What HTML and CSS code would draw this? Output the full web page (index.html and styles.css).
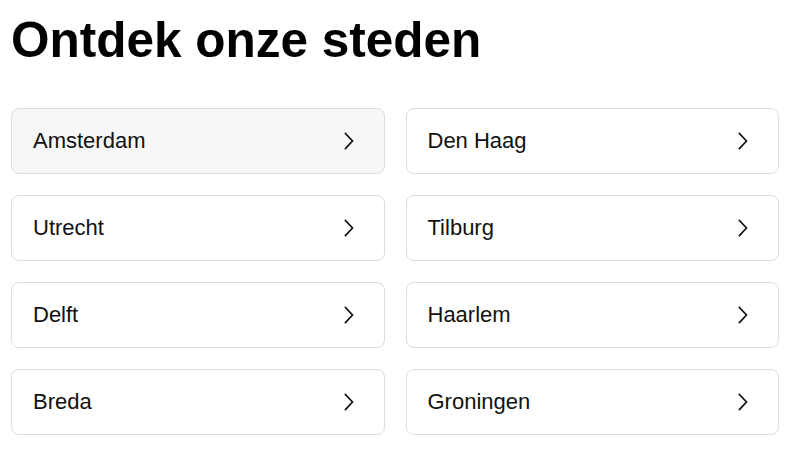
FILE: index.html
```html
<!DOCTYPE html>
<html lang="nl">
<head>
<meta charset="utf-8">
<link rel="stylesheet" href="styles.css">
</head>
<body>
<main class="page">
  <h1 class="title">Ontdek onze steden</h1>
  <ul class="cities">
    <li><a class="city city--active" href="#"><span>Amsterdam</span><svg class="chev" viewBox="0 0 10 18"><path d="M1.5 1.5 L8.5 9 L1.5 16.5"/></svg></a></li>
    <li><a class="city" href="#"><span>Den Haag</span><svg class="chev" viewBox="0 0 10 18"><path d="M1.5 1.5 L8.5 9 L1.5 16.5"/></svg></a></li>
    <li><a class="city" href="#"><span>Utrecht</span><svg class="chev" viewBox="0 0 10 18"><path d="M1.5 1.5 L8.5 9 L1.5 16.5"/></svg></a></li>
    <li><a class="city" href="#"><span>Tilburg</span><svg class="chev" viewBox="0 0 10 18"><path d="M1.5 1.5 L8.5 9 L1.5 16.5"/></svg></a></li>
    <li><a class="city" href="#"><span>Delft</span><svg class="chev" viewBox="0 0 10 18"><path d="M1.5 1.5 L8.5 9 L1.5 16.5"/></svg></a></li>
    <li><a class="city" href="#"><span>Haarlem</span><svg class="chev" viewBox="0 0 10 18"><path d="M1.5 1.5 L8.5 9 L1.5 16.5"/></svg></a></li>
    <li><a class="city" href="#"><span>Breda</span><svg class="chev" viewBox="0 0 10 18"><path d="M1.5 1.5 L8.5 9 L1.5 16.5"/></svg></a></li>
    <li><a class="city" href="#"><span>Groningen</span><svg class="chev" viewBox="0 0 10 18"><path d="M1.5 1.5 L8.5 9 L1.5 16.5"/></svg></a></li>
  </ul>
</main>
</body>
</html>
```

FILE: styles.css
```css
html, body {
  margin: 0;
  padding: 0;
  background: #ffffff;
}
body {
  font-family: "Liberation Sans", Arial, Helvetica, sans-serif;
  color: #111111;
}
.page {
  padding: 11px 0 0 11px;
  width: 768px;
}
.title {
  margin: 0 0 40px 0;
  font-size: 49.5px;
  font-weight: 700;
  line-height: 57px;
  color: #000000;
  letter-spacing: 0;
}
.cities {
  list-style: none;
  margin: 0;
  padding: 0;
  display: grid;
  grid-template-columns: 1fr 1fr;
  column-gap: 21px;
  row-gap: 21px;
}
.city {
  box-sizing: border-box;
  height: 66px;
  display: flex;
  align-items: center;
  justify-content: space-between;
  padding: 0 30px 0 21px;
  border: 1px solid #dcdcdc;
  border-radius: 8px;
  background: #ffffff;
  color: #111111;
  text-decoration: none;
  font-size: 22px;
}
.city--active {
  background: #f7f7f7;
}
.chev {
  width: 10px;
  height: 18px;
  fill: none;
  stroke: #111111;
  stroke-width: 1.7;
  stroke-linecap: square;
  stroke-linejoin: miter;
}
```
